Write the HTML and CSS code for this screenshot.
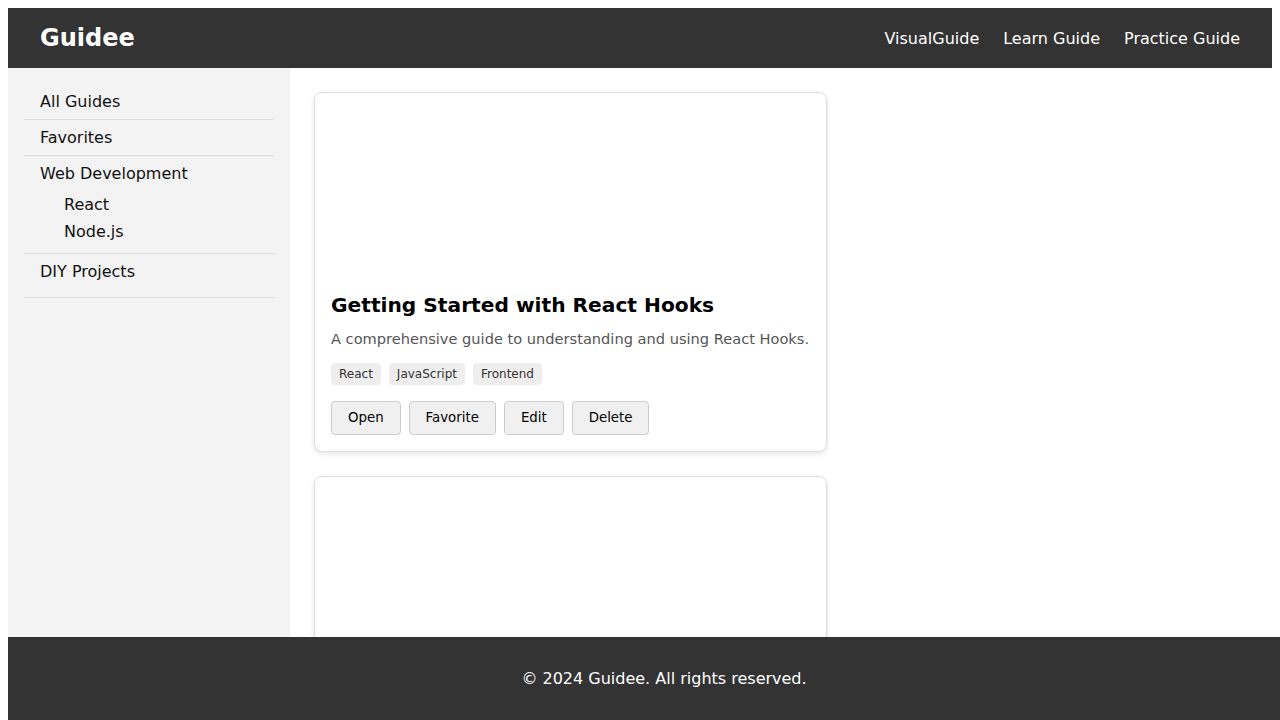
FILE: index.html
```html
<!DOCTYPE html>
<html lang="en">
<head>
<meta charset="utf-8">
<title>Guidee</title>
<link rel="stylesheet" href="styles.css">
</head>
<body>
<header class="site-header">
  <h1 class="logo">Guidee</h1>
  <nav class="top-nav">
    <a href="#">VisualGuide</a>
    <a href="#">Learn Guide</a>
    <a href="#">Practice Guide</a>
  </nav>
</header>
<div class="layout">
  <aside class="sidebar">
    <ul class="side-list">
      <li class="side-item">All Guides</li>
      <li class="side-item">Favorites</li>
      <li class="side-item">Web Development
        <ul class="sub-list">
          <li class="sub-item">React</li>
          <li class="sub-item">Node.js</li>
        </ul>
      </li>
      <li class="side-item">DIY Projects
        <ul class="sub-list"></ul>
      </li>
    </ul>
  </aside>
  <main class="content">
    <article class="card">
      <div class="card-image"></div>
      <div class="card-body">
        <h3 class="card-title">Getting Started with React Hooks</h3>
        <p class="card-desc">A comprehensive guide to understanding and using React Hooks.</p>
        <div class="tags">
          <span class="tag">React</span>
          <span class="tag">JavaScript</span>
          <span class="tag">Frontend</span>
        </div>
        <div class="actions">
          <button class="btn">Open</button>
          <button class="btn">Favorite</button>
          <button class="btn">Edit</button>
          <button class="btn">Delete</button>
        </div>
      </div>
    </article>
    <article class="card">
      <div class="card-image"></div>
      <div class="card-body">
        <h3 class="card-title">Building a Wooden Bookshelf</h3>
        <p class="card-desc">Step-by-step instructions for a simple DIY bookshelf.</p>
        <div class="tags">
          <span class="tag">DIY</span>
          <span class="tag">Woodworking</span>
        </div>
        <div class="actions">
          <button class="btn">Open</button>
          <button class="btn">Favorite</button>
          <button class="btn">Edit</button>
          <button class="btn">Delete</button>
        </div>
      </div>
    </article>
  </main>
</div>
<footer class="site-footer">
  <p class="footer-text">© 2024 Guidee. All rights reserved.</p>
</footer>
</body>
</html>
```
FILE: styles.css
```css
body {
  margin: 8px;
  font-family: "DejaVu Sans", sans-serif;
  color: #000;
  background: #fff;
}

.site-header {
  display: flex;
  justify-content: space-between;
  align-items: center;
  background: #333;
  color: #fff;
  padding: 16px 32px;
  height: 28px;
}

.logo {
  margin: 0;
  font-size: 24px;
  font-weight: bold;
  line-height: 28px;
}

.top-nav {
  display: flex;
  gap: 24px;
}

.top-nav a {
  color: #fff;
  text-decoration: none;
  font-size: 16px;
}

.layout {
  display: flex;
  align-items: stretch;
  min-height: 700px;
}

.sidebar {
  width: 250px;
  flex: 0 0 250px;
  padding: 16px;
  background: #f3f3f3;
}

.side-list {
  list-style: none;
  margin: 0;
  padding: 0;
}

.side-item {
  padding: 8px 16px;
  border-bottom: 1px solid #ddd;
  font-size: 16px;
  line-height: 19px;
  color: #111;
}

.sub-list {
  list-style: none;
  margin: 8px 0 0 0;
  padding: 0 0 0 24px;
}

.sub-item {
  padding: 4px 0;
  line-height: 19px;
}

.content {
  flex: 1;
  padding: 24px;
  display: flex;
  flex-direction: column;
  gap: 24px;
}

.card {
  width: 513px;
  box-sizing: border-box;
  border: 1px solid #ddd;
  border-radius: 8px;
  background: #fff;
  box-shadow: 0 2px 5px rgba(0, 0, 0, 0.1);
  overflow: hidden;
}

.card-image {
  height: 185px;
  background: #fff;
}

.card-body {
  padding: 16px;
}

.card-title {
  margin: 0 0 14px 0;
  font-size: 20.2px;
  line-height: 23px;
  font-weight: bold;
  color: #000;
}

.card-desc {
  margin: 0 0 16px 0;
  font-size: 14.6px;
  line-height: 16px;
  color: #555;
  white-space: nowrap;
}

.tags {
  display: flex;
  gap: 8px;
  margin-bottom: 16px;
}

.tag {
  background: #eee;
  color: #333;
  font-size: 12px;
  line-height: 14px;
  padding: 4px 8px;
  border-radius: 4px;
}

.actions {
  display: flex;
  gap: 8px;
}

.btn {
  font-family: "DejaVu Sans", sans-serif;
  font-size: 13.33px;
  line-height: 15.5px;
  color: #000;
  background: #f0f0f0;
  border: 1px solid #ccc;
  border-radius: 4px;
  padding: 8px 16px;
}

.site-footer {
  position: fixed;
  bottom: 0;
  width: 100%;
  padding: 16px;
  background: #333;
  color: #fff;
  text-align: center;
}

.footer-text {
  margin: 16px 0;
  font-size: 16px;
  line-height: 19px;
}
```
